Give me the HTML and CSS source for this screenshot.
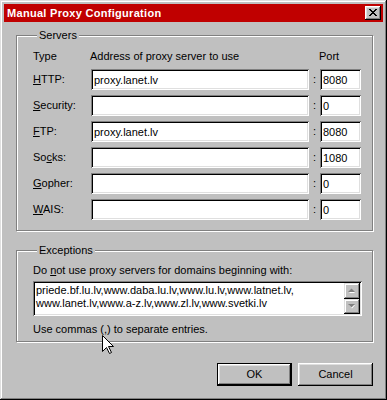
FILE: index.html
```html
<!DOCTYPE html>
<html lang="en">
<head>
    <meta charset="UTF-8">
    <title>Manual Proxy Configuration</title>
    <link rel="stylesheet" href="styles.css">
</head>
<body>
    <div class="window">
        <div class="titlebar">
            <span class="title">Manual Proxy Configuration</span>
            <button class="close-btn" aria-label="Close">
                <svg width="10" height="9" viewBox="0 0 10 9">
                    <path d="M1 1 L8 8 M2 1 L9 8 M8 1 L1 8 M9 1 L2 8" stroke="#000" stroke-width="1" shape-rendering="crispEdges"/>
                </svg>
            </button>
        </div>

        <div class="content">
            <fieldset class="group servers">
                <legend>Servers</legend>
                <div class="server-grid">
                    <span class="head">Type</span>
                    <span class="head">Address of proxy server to use</span>
                    <span></span>
                    <span class="head">Port</span>

                    <label><u>H</u>TTP:</label>
                    <input class="field" value="proxy.lanet.lv">
                    <span class="colon">:</span>
                    <input class="field port" value="8080">

                    <label><u>S</u>ecurity:</label>
                    <input class="field" value="">
                    <span class="colon">:</span>
                    <input class="field port" value="0">

                    <label><u>F</u>TP:</label>
                    <input class="field" value="proxy.lanet.lv">
                    <span class="colon">:</span>
                    <input class="field port" value="8080">

                    <label>So<u>c</u>ks:</label>
                    <input class="field" value="">
                    <span class="colon">:</span>
                    <input class="field port" value="1080">

                    <label><u>G</u>opher:</label>
                    <input class="field" value="">
                    <span class="colon">:</span>
                    <input class="field port" value="0">

                    <label><u>W</u>AIS:</label>
                    <input class="field" value="">
                    <span class="colon">:</span>
                    <input class="field port" value="0">
                </div>
            </fieldset>

            <fieldset class="group exceptions">
                <legend>Exceptions</legend>
                <div class="hint">Do <u>n</u>ot use proxy servers for domains beginning with:</div>
                <div class="memo field">
                    <div class="memo-text">
                        priede.bf.lu.lv,www.daba.lu.lv,www.lu.lv,www.latnet.lv,<br>
                        www.lanet.lv,www.a-z.lv,www.zl.lv,www.svetki.lv
                    </div>
                    <div class="scroll">
                        <div class="scroll-btn up">
                            <svg width="8" height="5" viewBox="0 0 8 5">
                                <path d="M1 5 L4 2 L7 5 Z" fill="#fff"/>
                                <path d="M0 4 L3.5 0.5 L7 4 Z" fill="#808080"/>
                            </svg>
                        </div>
                        <div class="scroll-btn down">
                            <svg width="8" height="5" viewBox="0 0 8 5">
                                <path d="M1 1 L4 4.5 L7 1 Z" fill="#fff"/>
                                <path d="M0 0 L3.5 3.5 L7 0 Z" fill="#808080"/>
                            </svg>
                        </div>
                    </div>
                </div>
                <div class="note">Use commas (,) to separate entries.</div>
            </fieldset>

            <div class="buttons-group">
                <button class="btn default">OK</button>
                <button class="btn">Cancel</button>
            </div>
        </div>

        <svg class="cursor" width="13" height="20" viewBox="0 0 13 20">
            <path d="M0.5 0.5 L0.5 16.5 L4.5 12.5 L7.5 18.5 L9.5 17.5 L6.5 11.5 L11.5 11.5 Z" fill="#fff" stroke="#000" stroke-width="1" stroke-linejoin="miter"/>
        </svg>
    </div>
</body>
</html>
```

FILE: styles.css
```css
body {
    margin: 0;
    font-family: "Liberation Sans", Arial, sans-serif;
    font-size: 11px;
    line-height: 13px;
    color: #000;
    background-color: #c0c0c0;
}

.window {
    position: relative;
    width: 387px;
    height: 400px;
    box-sizing: border-box;
    padding: 4px;
    background-color: #c0c0c0;
    box-shadow: inset -1px -1px #000, inset 1px 1px #dfdfdf,
                inset -2px -2px #808080, inset 2px 2px #fff;
    display: flex;
    flex-direction: column;
}

.titlebar {
    height: 18px;
    background-color: #c00000;
    color: #fff;
    font-weight: bold;
    display: flex;
    align-items: center;
    justify-content: space-between;
    padding: 0 2px 0 3px;
}

.title {
    letter-spacing: 0.3px;
}

.close-btn {
    width: 16px;
    height: 14px;
    padding: 0;
    border: none;
    background-color: #c0c0c0;
    box-shadow: inset -1px -1px #000, inset 1px 1px #fff,
                inset -2px -2px #808080, inset 2px 2px #dfdfdf;
    display: flex;
    align-items: center;
    justify-content: center;
}

.close-btn svg {
    display: block;
    margin: -1px 0 0 0;
}

.content {
    flex: 1;
    display: flex;
    flex-direction: column;
    padding: 7px 10px 0 12px;
}

.group {
    margin: 0;
    border: 1px solid #808080;
    box-shadow: inset 1px 1px #fff, 1px 1px #fff;
    min-inline-size: 0;
}

.group legend {
    padding: 0 2px;
    margin-left: 4px;
    background-color: #c0c0c0;
    line-height: 13px;
}

.servers {
    padding: 8px 11px 10px 16px;
}

.server-grid {
    display: grid;
    grid-template-columns: 58px 218px 11px 41px;
    grid-template-rows: 14px;
    grid-auto-rows: 21px;
    row-gap: 5px;
    align-items: center;
}

.server-grid .head {
    align-self: start;
}

.server-grid .head:nth-child(2) {
    margin-left: -1px;
}

.server-grid .head:nth-child(4) {
    margin-left: -1px;
}

.colon {
    text-align: center;
}

u {
    text-decoration: underline;
    text-underline-offset: 1px;
}

.field {
    box-sizing: border-box;
    height: 21px;
    margin: 0;
    padding: 0 2px 0 3px;
    border: none;
    outline: none;
    background-color: #fff;
    font: inherit;
    color: #000;
    box-shadow: inset 1px 1px #808080, inset -1px -1px #fff,
                inset 2px 2px #000, inset -2px -2px #dfdfdf;
}

.field.port {
    width: 41px;
}

.exceptions {
    margin-top: 13px;
    padding: 7px 10px 5px 16px;
}

.memo {
    height: 35px;
    width: 329px;
    margin-top: 4px;
    padding: 2px 2px 2px 2px;
    display: flex;
}

.memo-text {
    flex: 1;
    padding: 1px 0 0 1px;
    white-space: nowrap;
    overflow: hidden;
}

.scroll {
    width: 16px;
    display: flex;
    flex-direction: column;
}

.scroll-btn {
    flex: 1;
    background-color: #c0c0c0;
    box-shadow: inset -1px -1px #000, inset 1px 1px #dfdfdf,
                inset -2px -2px #808080, inset 2px 2px #fff;
    display: flex;
    align-items: center;
    justify-content: center;
}

.scroll-btn svg {
    display: block;
}

.note {
    margin-top: 7px;
}

.buttons-group {
    display: flex;
    justify-content: flex-end;
    gap: 6px;
    margin-top: 21px;
}

.btn {
    width: 75px;
    height: 23px;
    padding: 0;
    border: none;
    background-color: #c0c0c0;
    font: inherit;
    color: #000;
    box-shadow: inset -1px -1px #000, inset 1px 1px #fff,
                inset -2px -2px #808080, inset 2px 2px #dfdfdf;
}

.btn.default {
    box-shadow: inset 0 0 0 1px #000, inset -2px -2px #000, inset 2px 2px #fff,
                inset -3px -3px #808080, inset 3px 3px #dfdfdf;
}

.cursor {
    position: absolute;
    left: 102px;
    top: 335px;
}
```
